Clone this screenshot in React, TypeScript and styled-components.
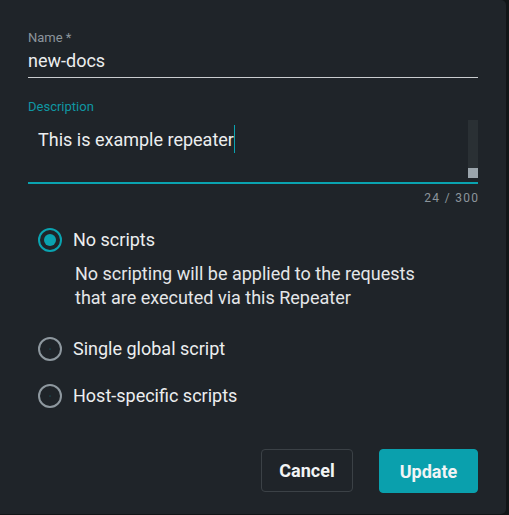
import React, { useState } from "react";
import styled, { createGlobalStyle } from "styled-components";

const GlobalStyle = createGlobalStyle`
  html, body { margin: 0; padding: 0; background: #121517; }
  body { font-family: Roboto, "Liberation Sans", sans-serif; -webkit-font-smoothing: antialiased; }
  * { box-sizing: border-box; }
`;

const Dialog = styled.div`
  width: 506px;
  height: 514px;
  background: #1f2429;
  border-radius: 0 5px 5px 0;
  padding: 30px 28px 0 28px;
  display: flex;
  flex-direction: column;
  color: #e8eaeb;
`;

const Label = styled.label<{ $active?: boolean }>`
  display: block;
  font-size: 13px;
  line-height: 16px;
  color: ${(p) => (p.$active ? "#0f97a3" : "#8c959c")};
`;

const NameInput = styled.div`
  height: 32px;
  border-bottom: 1px solid #c9cccf;
  font-size: 18px;
  line-height: 24px;
  padding-top: 3px;
  color: #eceeef;
`;

const DescLabel = styled(Label)`
  margin-top: 21px;
`;

const TextArea = styled.div`
  height: 69px;
  border-bottom: 2px solid #0aa3b0;
  display: flex;
  justify-content: space-between;
  align-items: flex-start;
  padding: 5px 0 0 10px;
`;

const AreaText = styled.div`
  margin-top: 8px;
  font-size: 18px;
  line-height: 24px;
  color: #eceeef;
  display: flex;
  align-items: flex-start;
`;

const Caret = styled.span`
  display: inline-block;
  width: 1px;
  height: 28px;
  background: #0aa3b0;
  margin-top: -3px;
`;

const ScrollTrack = styled.div`
  width: 10px;
  height: 58px;
  background: #2a3034;
  display: flex;
  flex-direction: column;
  justify-content: flex-end;
`;

const ScrollThumb = styled.div`
  height: 10px;
  background: #9ba5ac;
`;

const Counter = styled.div`
  margin-top: 6px;
  margin-right: -1.3px;
  text-align: right;
  font-size: 12px;
  line-height: 16px;
  letter-spacing: 1.3px;
  color: #8c959c;
`;

const Options = styled.div`
  margin-top: 22px;
  padding-left: 10px;
  display: flex;
  flex-direction: column;
`;

const OptionRow = styled.div<{ $gap: number }>`
  display: flex;
  align-items: center;
  gap: 11px;
  height: 24px;
  margin-top: ${(p) => p.$gap}px;
  cursor: pointer;
`;

const Radio = styled.span<{ $checked?: boolean }>`
  width: 24px;
  height: 24px;
  border-radius: 50%;
  border: 2px solid ${(p) => (p.$checked ? "#0aa3b0" : "#8e989f")};
  display: flex;
  align-items: center;
  justify-content: center;
  flex-shrink: 0;
  &::after {
    content: "";
    width: 12px;
    height: 12px;
    border-radius: 50%;
    background: #0aa3b0;
    transform: scale(${(p) => (p.$checked ? 1 : 0.08)});
  }
`;

const OptionLabel = styled.span`
  font-size: 18px;
  line-height: 24px;
  color: #eceeef;
`;

const OptionHelp = styled.p`
  margin: 10px 0 0 37px;
  font-size: 18px;
  line-height: 24px;
  color: #e4e6e8;
`;

const Footer = styled.div`
  margin-top: 41px;
  display: flex;
  justify-content: flex-end;
  gap: 26px;
`;

const Button = styled.button<{ $primary?: boolean }>`
  height: ${(p) => (p.$primary ? 44 : 43)}px;
  padding: 0;
  width: ${(p) => (p.$primary ? 99 : 92)}px;
  border-radius: 4px;
  font-family: inherit;
  font-size: 18px;
  font-weight: 700;
  color: #f2f4f5;
  background: ${(p) => (p.$primary ? "#0aa0ad" : "transparent")};
  border: 1px solid ${(p) => (p.$primary ? "#0aa0ad" : "#3b4146")};
  cursor: pointer;
`;

const options = [
  { id: "none", label: "No scripts" },
  { id: "global", label: "Single global script" },
  { id: "host", label: "Host-specific scripts" },
];

export default function App() {
  const [value, setValue] = useState("none");
  return (
    <>
      <GlobalStyle />
      <Dialog>
        <Label>Name *</Label>
        <NameInput>new-docs</NameInput>
        <DescLabel $active>Description</DescLabel>
        <TextArea>
          <AreaText>
            This is example repeater
            <Caret />
          </AreaText>
          <ScrollTrack>
            <ScrollThumb />
          </ScrollTrack>
        </TextArea>
        <Counter>24 / 300</Counter>
        <Options>
          {options.map((o, i) => (
            <React.Fragment key={o.id}>
              <OptionRow $gap={i === 0 ? 0 : i === 1 ? 27 : 23} onClick={() => setValue(o.id)}>
                <Radio $checked={value === o.id} />
                <OptionLabel>{o.label}</OptionLabel>
              </OptionRow>
              {o.id === "none" && (
                <OptionHelp>
                  No scripting will be applied to the requests
                  <br />
                  that are executed via this Repeater
                </OptionHelp>
              )}
            </React.Fragment>
          ))}
        </Options>
        <Footer>
          <Button>Cancel</Button>
          <Button $primary>Update</Button>
        </Footer>
      </Dialog>
    </>
  );
}
